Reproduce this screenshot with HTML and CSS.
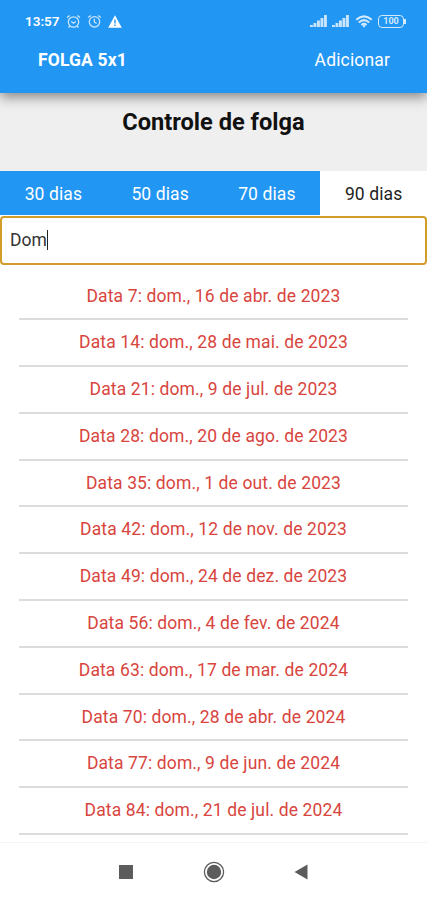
FILE: index.html
```html
<!DOCTYPE html>
<html lang="pt-BR">
<head>
    <meta charset="UTF-8">
    <meta name="viewport" content="width=device-width, initial-scale=1.0">
    <title>Folga 5x1</title>
    <link rel="stylesheet" href="styles.css">
</head>
<body>
    <header class="topo">
        <div class="status-bar">
            <span class="hora">13:57</span>
            <svg class="icone-alarme" width="15" height="15" viewBox="0 0 15 15">
                <circle cx="7.5" cy="8" r="5.2"/>
                <path d="M1 3.6 3.7 1.4M14 3.6 11.3 1.4M5.2 7.4 7.5 9.2 9.8 7.4M3.6 12.2 2.6 13.6M11.4 12.2 12.4 13.6"/>
            </svg>
            <svg class="icone-alarme icone-relogio" width="15" height="15" viewBox="0 0 15 15">
                <circle cx="7.5" cy="7.8" r="5.2"/>
                <path d="M1.2 3.4 3.8 1.4M13.8 3.4 11.2 1.4M7.3 4.8V8L9.6 9.4"/>
            </svg>
            <svg class="icone-alerta" width="14" height="13" viewBox="0 0 14 13">
                <path fill="#fff" d="M7 .2 13.8 12.8H.2z"/>
                <path fill="#2196f3" d="M6.3 4.6h1.4v4H6.3zM6.3 9.6h1.4V11H6.3z"/>
            </svg>
            <div class="status-direita">
                <svg width="17" height="12" viewBox="0 0 17 12" fill="#c9e5fc">
                    <path d="M0 10h2.9v2H0zM3.5 8h2.9v4H3.5zM7 5.6h2.9V12H7zM10.5 3h2.9v9h-2.9zM14 0h2.9v12H14z"/>
                </svg>
                <svg class="sinal" width="17" height="12" viewBox="0 0 17 12" fill="#c9e5fc">
                    <path d="M0 10h2.9v2H0zM3.5 8h2.9v4H3.5zM7 5.6h2.9V12H7zM10.5 3h2.9v9h-2.9zM14 0h2.9v12H14z"/>
                </svg>
                <svg class="wifi" width="18" height="13" viewBox="0 0 18 13">
                    <path class="onda" d="M1.2 4.8Q9-2 16.8 4.8M3.8 7.4Q9 2.8 14.2 7.4M6.4 9.9Q9 7.6 11.6 9.9"/>
                    <path fill="#d3eafd" d="M7.2 10.6Q9 9.2 10.8 10.6L9 12.8z"/>
                </svg>
                <div class="bateria"><span>100</span></div>
            </div>
        </div>
        <nav class="menu">
            <span class="logo">FOLGA 5x1</span>
            <a class="adicionar">Adicionar</a>
        </nav>
    </header>

    <section class="titulo">
        <h1>Controle de folga</h1>
    </section>

    <div class="abas">
        <button>30 dias</button>
        <button>50 dias</button>
        <button>70 dias</button>
        <button class="ativo">90 dias</button>
    </div>

    <div class="busca"><span>Dom</span></div>

    <ul class="lista">
        <li>Data 7: dom., 16 de abr. de 2023</li>
        <li>Data 14: dom., 28 de mai. de 2023</li>
        <li>Data 21: dom., 9 de jul. de 2023</li>
        <li>Data 28: dom., 20 de ago. de 2023</li>
        <li>Data 35: dom., 1 de out. de 2023</li>
        <li>Data 42: dom., 12 de nov. de 2023</li>
        <li>Data 49: dom., 24 de dez. de 2023</li>
        <li>Data 56: dom., 4 de fev. de 2024</li>
        <li>Data 63: dom., 17 de mar. de 2024</li>
        <li>Data 70: dom., 28 de abr. de 2024</li>
        <li>Data 77: dom., 9 de jun. de 2024</li>
        <li>Data 84: dom., 21 de jul. de 2024</li>
    </ul>

    <footer class="navegacao">
        <svg width="22" height="22" viewBox="0 0 22 22"><path d="M4 4h14v14H4z"/></svg>
        <svg width="22" height="22" viewBox="0 0 22 22">
            <circle cx="11" cy="11" r="9.6" fill="none" stroke="#5c5c5c" stroke-width="1.3"/>
            <circle cx="11" cy="11" r="7.2"/>
        </svg>
        <svg width="22" height="22" viewBox="0 0 22 22"><path d="M3.5 11 16.5 3.5v15z"/></svg>
    </footer>
</body>
</html>
```
FILE: styles.css
```css
:root {
    --azul: #2196f3;
    --vermelho: #d8453e;
    --cinza: #efefef;
}

* {
    box-sizing: border-box;
}

body {
    margin: 0;
    height: 900px;
    display: flex;
    flex-direction: column;
    overflow: hidden;
    background-color: #fff;
    font-family: Roboto, sans-serif;
    font-size: 17.5px;
}

.topo {
    position: relative;
    height: 93px;
    flex: none;
    background-color: var(--azul);
    color: #fff;
    box-shadow: 0 4px 12px rgba(0, 0, 0, 0.45);
}

.status-bar {
    display: flex;
    align-items: center;
    height: 42px;
    padding: 0 21px 0 25px;
}

.hora {
    width: 34px;
    font-size: 13.5px;
    font-weight: 600;
}

.icone-alarme {
    margin-left: 7px;
    fill: none;
    stroke: #c9e5fc;
    stroke-width: 1.3;
}

.icone-relogio {
    margin-left: 6px;
}

.icone-alerta {
    margin-left: 6px;
}

.status-direita {
    display: flex;
    align-items: center;
    margin-left: auto;
}

.sinal {
    margin-left: 5px;
}

.wifi {
    margin-left: 6px;
}

.onda {
    fill: none;
    stroke: #d3eafd;
    stroke-width: 2;
}

.bateria {
    position: relative;
    display: flex;
    align-items: center;
    justify-content: center;
    width: 26px;
    height: 13px;
    margin: 0 2px 0 5px;
    border: 1.5px solid #d3eafd;
    border-radius: 4px;
    color: #d3eafd;
    font-size: 9px;
    font-weight: 700;
}

.bateria::after {
    content: "";
    position: absolute;
    right: -3px;
    top: 3px;
    width: 2px;
    height: 5px;
    background-color: #d3eafd;
}

.menu {
    display: flex;
    align-items: center;
    justify-content: space-between;
    height: 36px;
    padding: 0 37px 0 38px;
    letter-spacing: 0.15px;
}

.logo {
    font-weight: 700;
}

.titulo {
    height: 78px;
    flex: none;
    background-color: var(--cinza);
    text-align: center;
}

.titulo h1 {
    margin: 0;
    padding-top: 15px;
    font-size: 23.6px;
    line-height: 28px;
    font-weight: 700;
    color: #111;
}

.abas {
    display: flex;
    flex: none;
    height: 44px;
}

.abas button {
    flex: 1;
    padding: 2px 0 0;
    border: none;
    background-color: var(--azul);
    color: #fff;
    font: inherit;
    letter-spacing: 0.1px;
}

.abas .ativo {
    background-color: #fff;
    color: #222;
}

.busca {
    display: flex;
    align-items: center;
    flex: none;
    height: 49px;
    margin-top: 1px;
    padding: 0 8px 2px;
    border: 2px solid #d39d2b;
    border-radius: 4px;
    color: #333;
}

.busca span {
    border-right: 1px solid #222;
}

.lista {
    flex: none;
    margin: 0;
    padding: 8.5px 19px 0;
    list-style: none;
}

.lista li {
    height: 46.8px;
    border-bottom: 2px solid #dcdcdc;
    color: var(--vermelho);
    line-height: 45.6px;
    letter-spacing: 0.12px;
    text-align: center;
}

.navegacao {
    display: flex;
    align-items: center;
    justify-content: center;
    gap: 66px;
    flex: 1;
    margin-top: 7px;
    border-top: 1px solid #f4f4f4;
    fill: #5c5c5c;
}
```
